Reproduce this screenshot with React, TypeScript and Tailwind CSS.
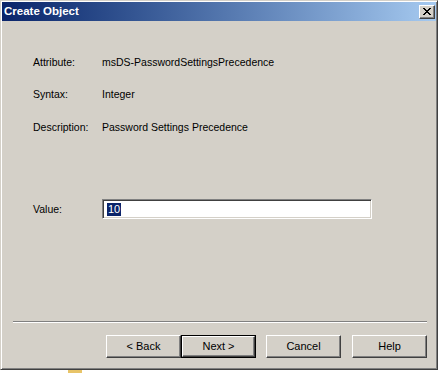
import React from 'react';

const font = "font-['Liberation_Sans',Arial,sans-serif]";

const CloseGlyph = () => (
  <svg width="8" height="7" viewBox="0 0 8 7" shapeRendering="crispEdges">
    <path
      fill="#000"
      d="M0 0h2v1H0zM6 0h2v1H6zM1 1h2v1H1zM5 1h2v1H5zM2 2h4v1H2zM3 3h2v1H3zM2 4h4v1H2zM1 5h2v1H1zM5 5h2v1H5zM0 6h2v1H0zM6 6h2v1H6z"
    />
  </svg>
);

const Button = ({ label, isDefault = false }: { label: string; isDefault?: boolean }) => {
  const bevel =
    'border border-t-white border-l-white border-r-[#404040] border-b-[#404040] shadow-[inset_-1px_-1px_#808080]';
  if (isDefault) {
    return (
      <div className="w-[75px] h-[23px] border border-black">
        <div className={`w-full h-full flex items-center justify-center bg-[#d4d0c8] ${bevel}`}>
          <span className="text-[11px] text-black">{label}</span>
        </div>
      </div>
    );
  }
  return (
    <div className={`w-[75px] h-[23px] flex items-center justify-center bg-[#d4d0c8] ${bevel}`}>
      <span className="text-[11px] text-black">{label}</span>
    </div>
  );
};

const InfoRow = ({ label, value, className = '' }: { label: string; value: string; className?: string }) => (
  <div className={`flex items-center h-[13px] ${className}`}>
    <span className="w-[69px] shrink-0">{label}</span>
    <span>{value}</span>
  </div>
);

export default function App() {
  return (
    <div className={`w-[440px] h-[373px] bg-white overflow-hidden flex flex-col ${font}`}>
      {/* dialog window */}
      <div className="w-[438px] h-[370px] shrink-0 flex flex-col bg-[#d4d0c8] border border-t-[#d4d0c8] border-l-[#d4d0c8] border-r-[#404040] border-b-[#404040] shadow-[inset_1px_1px_#ffffff,inset_-1px_-1px_#808080] p-px">
        {/* title bar */}
        <div className="h-[19px] flex items-center justify-between pl-[2px] pr-[1px] bg-gradient-to-r from-[#0a246a] to-[#a6caf0]">
          <span className="text-white font-bold text-[11.5px] leading-none">Create Object</span>
          <div className="w-[16px] h-[14px] flex items-center justify-center bg-[#d4d0c8] border border-t-white border-l-white border-r-[#404040] border-b-[#404040] shadow-[inset_-1px_-1px_#808080]">
            <CloseGlyph />
          </div>
        </div>

        {/* body */}
        <div className="flex-1 flex flex-col pl-[31px] pr-[9px] pt-[35px] text-[10.5px] text-black leading-none">
          <InfoRow label="Attribute:" value="msDS-PasswordSettingsPrecedence" />
          <InfoRow label="Syntax:" value="Integer" className="mt-[19px]" />
          <InfoRow label="Description:" value="Password Settings Precedence" className="mt-[20px]" />

          <div className="flex items-center h-[20px] mt-[65px]">
            <span className="w-[69px] shrink-0">Value:</span>
            <div className="w-[270px] h-[20px] flex items-center bg-white border border-t-[#808080] border-l-[#808080] border-b-white border-r-white shadow-[inset_1px_1px_#404040,inset_-1px_-1px_#d4d0c8] pl-[4px]">
              <span className="bg-[#0a246a] text-white text-[11px] px-px h-[13px] flex items-center">10</span>
            </div>
          </div>

          <div className="mt-[102px] -ml-[20px] h-[2px] border-t border-t-[#808080] border-b border-b-white" />

          <div className="mt-[12px] flex justify-end">
            <Button label="< Back" />
            <Button label="Next >" isDefault />
            <div className="w-[10px]" />
            <Button label="Cancel" />
            <div className="w-[11px]" />
            <Button label="Help" />
          </div>
        </div>
      </div>

      {/* edge of the folder icon in the window behind */}
      <div className="h-[3px] flex items-start pl-[68px] overflow-hidden">
        <div className="w-[14px] h-[3px] bg-[#e8c468]" />
      </div>
    </div>
  );
}
